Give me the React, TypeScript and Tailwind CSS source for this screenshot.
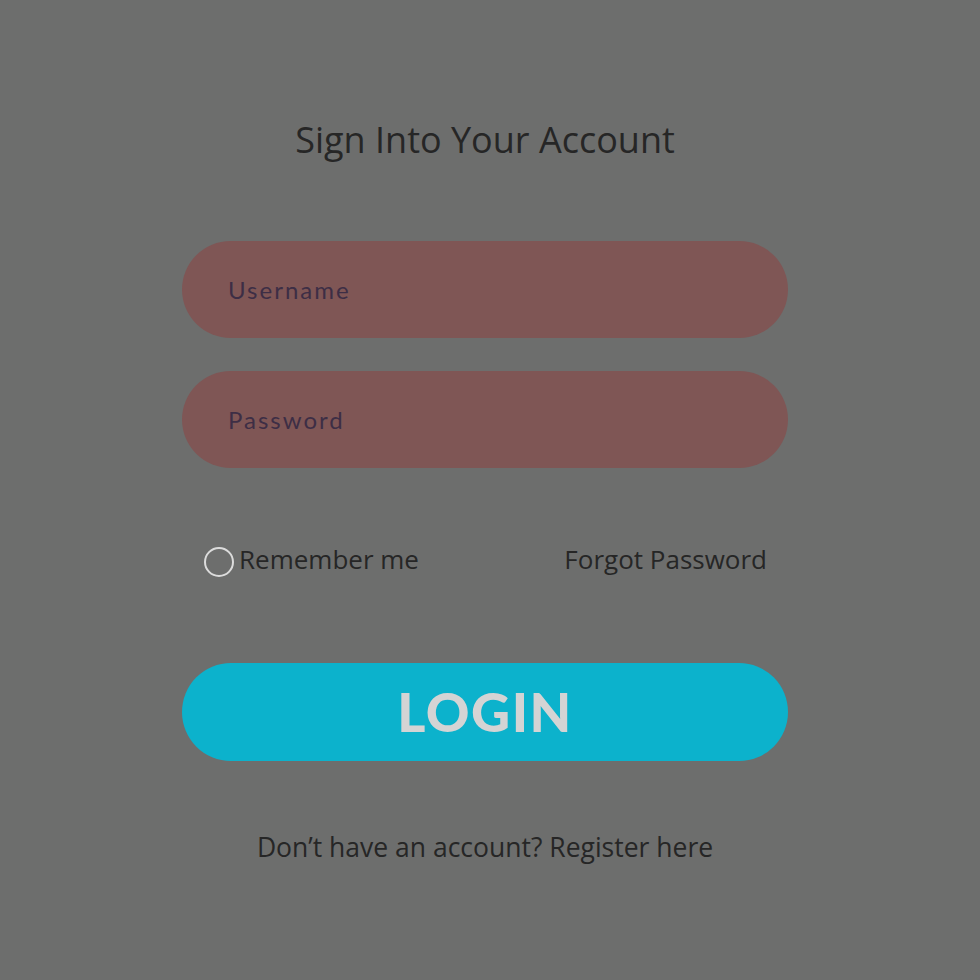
export default function App() {
  return (
    <div className="min-h-[980px] w-full bg-[#6d6e6d]" style={{ fontFamily: "'Open Sans', sans-serif" }}>
      <div className="ml-[182px] flex w-[606px] flex-col pt-[116px]">
        <h1 className="text-center text-[36px] leading-[48px] text-[#262626]">Sign Into Your Account</h1>

        <div className="mt-[77px] flex flex-col gap-[33px]">
          <div className="flex h-[97px] items-center rounded-full bg-[#7f5655] pl-[46px] font-['Lato',sans-serif] text-[24px] tracking-[2px] text-[#3d2e45]">
            Username
          </div>
          <div className="flex h-[97px] items-center rounded-full bg-[#7f5655] pl-[46px] font-['Lato',sans-serif] text-[24px] tracking-[2px] text-[#3d2e45]">
            Password
          </div>
        </div>

        <div className="mt-[72px] flex items-center justify-between pl-[22px] pr-[21px] text-[26px] text-[#262626]">
          <div className="flex items-center gap-[5px]">
            <span className="mt-[4px] h-[30px] w-[30px] rounded-full border-2 border-[#dcdcdc]" />
            <span>Remember me</span>
          </div>
          <span>Forgot Password</span>
        </div>

        <button className="mt-[84px] flex h-[98px] items-center justify-center rounded-full bg-[#0cb2cc] pb-[2px] font-['Lato',sans-serif] text-[54px] font-black tracking-[1.5px] text-[#d4d4d4]">
          LOGIN
        </button>

        <p className="mt-[67px] text-center text-[26.5px] text-[#262626]">Don’t have an account? Register here</p>
      </div>
    </div>
  );
}
